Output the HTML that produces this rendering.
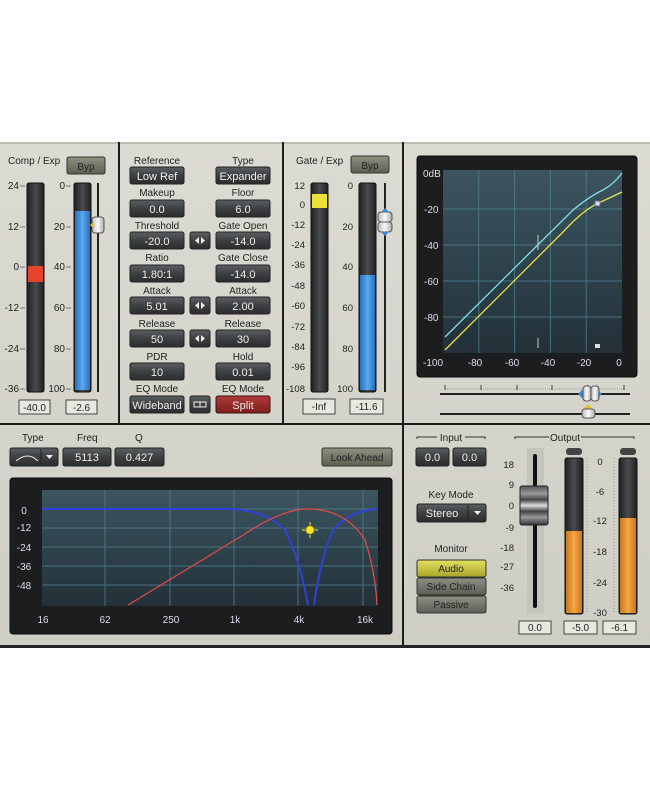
<!DOCTYPE html>
<html><head><meta charset="utf-8"><style>
html,body{margin:0;padding:0;background:#fff;width:650px;height:794px;overflow:hidden}
svg{display:block}
text{font-family:"Liberation Sans",sans-serif}
</style></head><body>
<svg width="650" height="794" viewBox="0 0 650 794" xmlns="http://www.w3.org/2000/svg">
<defs>
<linearGradient id="bg" x1="0" y1="0" x2="0" y2="1"><stop offset="0" stop-color="#dcdbd3"/><stop offset="1" stop-color="#cfcec5"/></linearGradient>
<linearGradient id="btn" x1="0" y1="0" x2="0" y2="1"><stop offset="0" stop-color="#5c5f61"/><stop offset="0.5" stop-color="#3d4042"/><stop offset="1" stop-color="#2a2c2e"/></linearGradient>
<linearGradient id="byp" x1="0" y1="0" x2="0" y2="1"><stop offset="0" stop-color="#8f907f"/><stop offset="1" stop-color="#5e5f52"/></linearGradient>
<linearGradient id="red" x1="0" y1="0" x2="0" y2="1"><stop offset="0" stop-color="#b23a3a"/><stop offset="1" stop-color="#7d1e1e"/></linearGradient>
<linearGradient id="yel" x1="0" y1="0" x2="0" y2="1"><stop offset="0" stop-color="#e2e060"/><stop offset="1" stop-color="#a9a52a"/></linearGradient>
<linearGradient id="gry" x1="0" y1="0" x2="0" y2="1"><stop offset="0" stop-color="#8e8f84"/><stop offset="1" stop-color="#5c5d55"/></linearGradient>
<linearGradient id="met" x1="0" y1="0" x2="1" y2="0"><stop offset="0" stop-color="#1f2021"/><stop offset="0.5" stop-color="#4a4b4c"/><stop offset="1" stop-color="#1f2021"/></linearGradient>
<linearGradient id="blue" x1="0" y1="0" x2="1" y2="0"><stop offset="0" stop-color="#2a6fc0"/><stop offset="0.5" stop-color="#5aa8ee"/><stop offset="1" stop-color="#2a6fc0"/></linearGradient>
<linearGradient id="org" x1="0" y1="0" x2="1" y2="0"><stop offset="0" stop-color="#c8781a"/><stop offset="0.5" stop-color="#f5a845"/><stop offset="1" stop-color="#c8781a"/></linearGradient>
<linearGradient id="plot" x1="0" y1="0" x2="0" y2="1"><stop offset="0" stop-color="#3d5560"/><stop offset="0.5" stop-color="#2e434c"/><stop offset="1" stop-color="#233038"/></linearGradient>
<linearGradient id="thumb" x1="0" y1="0" x2="1" y2="0"><stop offset="0" stop-color="#bbb"/><stop offset="0.5" stop-color="#fafafa"/><stop offset="1" stop-color="#aaa"/></linearGradient>
<linearGradient id="fader" x1="0" y1="0" x2="0" y2="1"><stop offset="0" stop-color="#555"/><stop offset="0.2" stop-color="#999"/><stop offset="0.35" stop-color="#444"/><stop offset="0.5" stop-color="#ddd"/><stop offset="0.65" stop-color="#444"/><stop offset="0.8" stop-color="#999"/><stop offset="1" stop-color="#333"/></linearGradient>
</defs>
<rect x="0" y="142" width="650" height="506" fill="url(#bg)"/>
<rect x="0" y="142" width="650" height="2" fill="#bdbcb4"/>
<rect x="118" y="142" width="2" height="282" fill="#1c1c1c"/>
<rect x="282" y="142" width="2" height="282" fill="#1c1c1c"/>
<rect x="402" y="142" width="2" height="505" fill="#1c1c1c"/>
<rect x="0" y="423" width="650" height="2" fill="#1c1c1c"/>
<rect x="0" y="645" width="650" height="3" fill="#222"/>

<g font-size="10" fill="#222">
<text x="8" y="164">Comp / Exp</text>
<rect x="67" y="157" width="38" height="17" rx="2" fill="url(#byp)" stroke="#333"/>
<text x="86" y="170" text-anchor="middle" fill="#222">Byp</text>
<rect x="27" y="183" width="17" height="209" rx="2" fill="url(#met)" stroke="#111"/>
<rect x="28" y="266" width="15" height="16" fill="#e4432d"/>
<rect x="74" y="183" width="17" height="209" rx="2" fill="url(#met)" stroke="#111"/>
<rect x="75" y="211" width="15" height="179" fill="url(#blue)"/>
<rect x="97" y="183" width="2" height="209" fill="#222"/>
<rect x="92" y="217" width="12" height="16" rx="3" fill="url(#thumb)" stroke="#555"/>
<path d="M90 225 l4 -4 v8z" fill="#e0c030"/>
<g text-anchor="end" font-size="10">
<text x="19" y="189">24</text><text x="19" y="230">12</text><text x="19" y="270">0</text><text x="19" y="311">-12</text><text x="19" y="352">-24</text><text x="19" y="392">-36</text>
<text x="65" y="189">0</text><text x="65" y="230">20</text><text x="65" y="270">40</text><text x="65" y="311">60</text><text x="65" y="352">80</text><text x="65" y="392">100</text>
</g>
<g stroke="#777" stroke-width="1">
<path d="M20 186h5M20 227h5M20 267h5M20 308h5M20 349h5M20 389h5M66 186h5M66 227h5M66 267h5M66 308h5M66 349h5M66 389h5"/>
</g>
<rect x="19" y="400" width="31" height="14" fill="#e8e7e0" stroke="#444"/><text x="34.5" y="411" text-anchor="middle">-40.0</text>
<rect x="66" y="400" width="31" height="14" fill="#e8e7e0" stroke="#444"/><text x="81.5" y="411" text-anchor="middle">-2.6</text>

<g text-anchor="middle">
<text x="157" y="164">Reference</text><text x="243" y="164">Type</text>
<text x="157" y="196">Makeup</text><text x="243" y="196">Floor</text>
<text x="157" y="229">Threshold</text><text x="243" y="229">Gate Open</text>
<text x="157" y="261">Ratio</text><text x="243" y="261">Gate Close</text>
<text x="157" y="294">Attack</text><text x="243" y="294">Attack</text>
<text x="157" y="327">Release</text><text x="243" y="327">Release</text>
<text x="157" y="360">PDR</text><text x="243" y="360">Hold</text>
<text x="157" y="392">EQ Mode</text><text x="243" y="392">EQ Mode</text>
</g>
<g fill="url(#btn)" stroke="#222">
<rect x="130" y="167" width="54" height="17" rx="2"/><rect x="216" y="167" width="54" height="17" rx="2"/>
<rect x="130" y="200" width="54" height="17" rx="2"/><rect x="216" y="200" width="54" height="17" rx="2"/>
<rect x="130" y="232" width="54" height="17" rx="2"/><rect x="216" y="232" width="54" height="17" rx="2"/>
<rect x="130" y="265" width="54" height="17" rx="2"/><rect x="216" y="265" width="54" height="17" rx="2"/>
<rect x="130" y="297" width="54" height="17" rx="2"/><rect x="216" y="297" width="54" height="17" rx="2"/>
<rect x="130" y="330" width="54" height="17" rx="2"/><rect x="216" y="330" width="54" height="17" rx="2"/>
<rect x="130" y="363" width="54" height="17" rx="2"/><rect x="216" y="363" width="54" height="17" rx="2"/>
<rect x="130" y="396" width="54" height="17" rx="2"/>
<rect x="190" y="232" width="20" height="17" rx="2"/><rect x="190" y="297" width="20" height="17" rx="2"/><rect x="190" y="330" width="20" height="17" rx="2"/><rect x="190" y="396" width="20" height="17" rx="2"/>
</g>
<rect x="216" y="396" width="54" height="17" rx="2" fill="url(#red)" stroke="#3a1010"/>
<g fill="#eee" font-size="11" text-anchor="middle">
<text x="157" y="180">Low Ref</text><text x="243" y="180">Expander</text>
<text x="157" y="213">0.0</text><text x="243" y="213">6.0</text>
<text x="157" y="245">-20.0</text><text x="243" y="245">-14.0</text>
<text x="157" y="278">1.80:1</text><text x="243" y="278">-14.0</text>
<text x="157" y="310">5.01</text><text x="243" y="310">2.00</text>
<text x="157" y="343">50</text><text x="243" y="343">30</text>
<text x="157" y="376">10</text><text x="243" y="376">0.01</text>
<text x="157" y="409">Wideband</text><text x="243" y="409">Split</text>
</g>
<g fill="#eee"><path d="M195 240.5l4-3.5v7zM205 240.5l-4-3.5v7zM195 305.5l4-3.5v7zM205 305.5l-4-3.5v7zM195 338.5l4-3.5v7zM205 338.5l-4-3.5v7z"/>
<rect x="194" y="402" width="12" height="5" fill="none" stroke="#eee"/><path d="M200 402v5" stroke="#eee"/></g>

<text x="296" y="164">Gate / Exp</text>
<rect x="351" y="156" width="38" height="17" rx="2" fill="url(#byp)" stroke="#333"/>
<text x="370" y="169" text-anchor="middle">Byp</text>
<rect x="311" y="183" width="17" height="209" rx="2" fill="url(#met)" stroke="#111"/>
<rect x="312" y="194" width="15" height="14" fill="#ecdf3a"/>
<rect x="359" y="183" width="17" height="209" rx="2" fill="url(#met)" stroke="#111"/>
<rect x="360" y="275" width="15" height="115" fill="url(#blue)"/>
<rect x="384" y="183" width="2" height="209" fill="#222"/>
<rect x="378" y="212" width="14" height="10" rx="3" fill="url(#thumb)" stroke="#555"/>
<rect x="378" y="222" width="14" height="10" rx="3" fill="url(#thumb)" stroke="#555"/>
<path d="M381 212l4-4 4 4zM381 232l4 4 4-4z" fill="#3a8ad8"/>
<g text-anchor="end" font-size="9.5">
<text x="305" y="189">12</text><text x="305" y="208">0</text><text x="305" y="228">-12</text><text x="305" y="248">-24</text><text x="305" y="268">-36</text><text x="305" y="289">-48</text><text x="305" y="309">-60</text><text x="305" y="330">-72</text><text x="305" y="350">-84</text><text x="305" y="370">-96</text><text x="305" y="392">-108</text>
<text x="353" y="189">0</text><text x="353" y="230">20</text><text x="353" y="270">40</text><text x="353" y="311">60</text><text x="353" y="352">80</text><text x="353" y="392">100</text>
</g>
<rect x="303" y="399" width="32" height="15" fill="#e8e7e0" stroke="#444"/><text x="319" y="410" text-anchor="middle">-Inf</text>
<rect x="350" y="399" width="33" height="15" fill="#e8e7e0" stroke="#444"/><text x="366.5" y="410" text-anchor="middle">-11.6</text>
</g>

<rect x="417" y="156" width="220" height="221" rx="3" fill="#1b1d1e" stroke="#0b0b0b"/>
<rect x="443" y="170" width="179" height="183" fill="url(#plot)"/>
<g stroke="#4e7f90" stroke-width="1" opacity="0.8">
<path d="M443 209h179M443 245h179M443 281h179M443 317h179M478.8 170v183M514.6 170v183M550.4 170v183M586.2 170v183"/>
</g>
<path d="M445 337 L573 210 Q590 196 603 190 Q614 184 622 173" fill="none" stroke="#7fe0e8" stroke-width="1.3"/>
<path d="M445 350 L565 230 Q585 208 603 201 L622 192" fill="none" stroke="#e6e24a" stroke-width="1.3"/>
<rect x="595" y="201" width="5" height="5" fill="#dde" stroke="#668"/>
<rect x="595" y="344" width="5" height="4" fill="#ddd"/>
<path d="M538 235v15M538 338v10" stroke="#ccc"/>
<g fill="#dde" font-size="10">
<text x="423" y="177">0dB</text><text x="424" y="213">-20</text><text x="424" y="249">-40</text><text x="424" y="285">-60</text><text x="424" y="321">-80</text>
<g text-anchor="middle"><text x="433" y="366">-100</text><text x="475" y="366">-80</text><text x="512" y="366">-60</text><text x="548" y="366">-40</text><text x="584" y="366">-20</text><text x="619" y="366">0</text></g>
</g>
<path d="M445 389h180" stroke="#999" stroke-dasharray="1 1"/>
<path d="M445 385v5M481 385v5M517 385v5M552 385v5M588 385v5M624 385v5" stroke="#444"/>
<rect x="440" y="393" width="190" height="2" fill="#222"/>
<rect x="440" y="413" width="190" height="2" fill="#222"/>
<path d="M578 394l5-5v10zM602 394l-5-5v10z" fill="#3a8ad8"/>
<rect x="583" y="386" width="8" height="15" rx="3" fill="url(#thumb)" stroke="#555"/>
<rect x="591" y="386" width="8" height="15" rx="3" fill="url(#thumb)" stroke="#555"/>
<path d="M583 409l5-5 5 5z" fill="#e0c030"/>
<rect x="582" y="409" width="13" height="9" rx="3" fill="url(#thumb)" stroke="#555"/>

<g font-size="10" fill="#222">
<text x="22" y="441">Type</text><text x="77" y="441">Freq</text><text x="135" y="441">Q</text>
</g>
<g fill="url(#btn)" stroke="#222">
<rect x="10" y="448" width="48" height="18" rx="2"/><rect x="63" y="448" width="48" height="18" rx="2"/><rect x="115" y="448" width="49" height="18" rx="2"/>
</g>
<path d="M41 449v16" stroke="#222"/>
<path d="M16 461 Q28 451 38 461" fill="none" stroke="#eee"/>
<path d="M46 455h7l-3.5 4z" fill="#eee"/>
<g fill="#eee" font-size="11" text-anchor="middle"><text x="87" y="461">5113</text><text x="139.5" y="461">0.427</text></g>
<rect x="322" y="448" width="70" height="18" rx="2" fill="url(#byp)" stroke="#333"/>
<text x="357" y="461" text-anchor="middle" font-size="10" fill="#222">Look Ahead</text>

<rect x="10" y="478" width="382" height="156" rx="3" fill="#1b1d1e" stroke="#0b0b0b"/>
<rect x="42" y="490" width="336" height="116" fill="url(#plot)"/>
<g stroke="#4e7f90" stroke-width="1" opacity="0.8">
<path d="M42 509h336M42 528h336M42 547h336M42 566h336M42 585h336M105 490v116M170 490v116M234 490v116M298 490v116M363 490v116"/>
</g>
<path d="M42 509 L230 509 Q265 510 285 530 Q300 560 308 605 M314 605 Q320 560 333 530 Q350 510 378 509" fill="none" stroke="#3040d8" stroke-width="2"/>
<path d="M128 605 L240 537 Q280 510 305 509 Q345 508 365 540 Q375 570 377 605" fill="none" stroke="#e04848" stroke-width="1.3"/>
<circle cx="310" cy="530" r="4" fill="#f4e830" stroke="#c9a800"/>
<path d="M310 522v3M310 535v3M302 530h3M315 530h3" stroke="#f4e830"/>
<g fill="#dde" font-size="10">
<g text-anchor="middle"><text x="24" y="514">0</text><text x="24" y="531">-12</text><text x="24" y="551">-24</text><text x="24" y="570">-36</text><text x="24" y="589">-48</text></g>
<g text-anchor="middle"><text x="43" y="623">16</text><text x="105" y="623">62</text><text x="171" y="623">250</text><text x="235" y="623">1k</text><text x="299" y="623">4k</text><text x="365" y="623">16k</text></g>
</g>

<g font-size="10" fill="#222">
<text x="451" y="441" text-anchor="middle">Input</text>
<path d="M417 439v-2h20M465 437h20v2" stroke="#333" fill="none"/>
<text x="565" y="441" text-anchor="middle">Output</text>
<path d="M515 439v-2h34M581 437h53v2" stroke="#333" fill="none"/>
<text x="451" y="498" text-anchor="middle">Key Mode</text>
<text x="451" y="552" text-anchor="middle">Monitor</text>
</g>
<g fill="url(#btn)" stroke="#222">
<rect x="416" y="448" width="33" height="18" rx="2"/><rect x="453" y="448" width="33" height="18" rx="2"/>
<rect x="417" y="504" width="69" height="18" rx="2"/>
</g>
<path d="M468 505v16" stroke="#222"/><path d="M474 511h7l-3.5 4z" fill="#eee"/>
<g fill="#eee" font-size="11" text-anchor="middle"><text x="432.5" y="461">0.0</text><text x="469.5" y="461">0.0</text><text x="442" y="517">Stereo</text></g>
<rect x="417" y="560" width="69" height="17" rx="2" fill="url(#yel)" stroke="#333"/>
<rect x="417" y="578" width="69" height="17" rx="2" fill="url(#gry)" stroke="#333"/>
<rect x="417" y="596" width="69" height="17" rx="2" fill="url(#gry)" stroke="#333"/>
<g font-size="10" text-anchor="middle"><text x="451" y="572" fill="#222">Audio</text><text x="451" y="590" fill="#222">Side Chain</text><text x="451" y="608" fill="#222">Passive</text></g>

<rect x="527" y="448" width="17" height="166" fill="#c5c4bb"/>
<rect x="533" y="454" width="4" height="154" rx="2" fill="#111"/>
<rect x="520" y="486" width="28" height="39" rx="2" fill="url(#fader)" stroke="#222"/>
<g font-size="9.5" fill="#222" text-anchor="end">
<text x="514" y="468">18</text><text x="514" y="488">9</text><text x="514" y="509">0</text><text x="514" y="531">-9</text><text x="514" y="551">-18</text><text x="514" y="570">-27</text><text x="514" y="591">-36</text>
</g>
<rect x="566" y="448" width="16" height="7" rx="3" fill="#444"/>
<rect x="620" y="448" width="16" height="7" rx="3" fill="#444"/>
<rect x="565" y="458" width="18" height="156" rx="2" fill="url(#met)" stroke="#111"/>
<rect x="566" y="531" width="16" height="82" fill="url(#org)"/>
<rect x="619" y="458" width="18" height="156" rx="2" fill="url(#met)" stroke="#111"/>
<rect x="620" y="518" width="16" height="95" fill="url(#org)"/>
<path d="M587 458v156M614 458v156" stroke="#999" stroke-dasharray="1 2"/>
<g font-size="9.5" fill="#222" text-anchor="middle">
<text x="600" y="465">0</text><text x="600" y="495">-6</text><text x="600" y="524">-12</text><text x="600" y="555">-18</text><text x="600" y="586">-24</text><text x="600" y="616">-30</text>
</g>
<g font-size="10" fill="#222" text-anchor="middle">
<rect x="519" y="621" width="32" height="13" fill="#e8e7e0" stroke="#444"/><text x="535" y="631">0.0</text>
<rect x="564" y="621" width="33" height="13" fill="#e8e7e0" stroke="#444"/><text x="580.5" y="631">-5.0</text>
<rect x="603" y="621" width="33" height="13" fill="#e8e7e0" stroke="#444"/><text x="619.5" y="631">-6.1</text>
</g>
</svg>
</body></html>
